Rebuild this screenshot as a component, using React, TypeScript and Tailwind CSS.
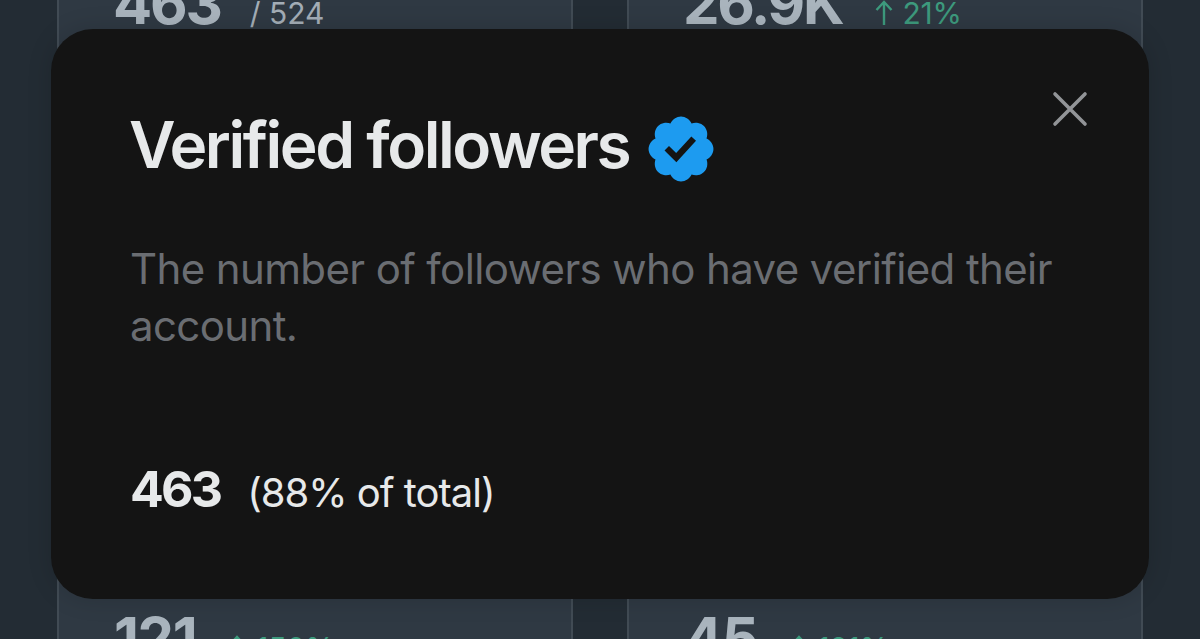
import React from 'react';

const VerifiedBadge: React.FC<{ className?: string }> = ({ className }) => (
  <svg viewBox="0 0 22 22" aria-label="Verified account" className={className} fill="#1d9bf0">
    <path d="M20.396 11c-.018-.646-.215-1.275-.57-1.816-.354-.54-.852-.972-1.438-1.246.223-.607.27-1.264.14-1.897-.131-.634-.437-1.218-.882-1.687-.47-.445-1.053-.75-1.687-.882-.633-.13-1.29-.083-1.897.14-.273-.587-.704-1.086-1.245-1.44S11.647 1.62 11 1.604c-.646.017-1.273.213-1.813.568s-.969.854-1.24 1.44c-.608-.223-1.267-.272-1.902-.14-.635.13-1.22.436-1.69.882-.445.47-.749 1.055-.878 1.688-.13.633-.08 1.29.144 1.896-.587.274-1.087.705-1.443 1.245-.356.54-.555 1.17-.574 1.817.02.647.218 1.276.574 1.817.356.54.856.972 1.443 1.245-.224.606-.274 1.263-.144 1.896.13.634.433 1.218.877 1.688.47.443 1.054.747 1.687.878.633.132 1.29.084 1.897-.136.274.586.705 1.084 1.246 1.439.54.354 1.17.551 1.816.569.647-.016 1.276-.213 1.817-.567s.972-.854 1.245-1.44c.604.239 1.266.296 1.903.164.636-.132 1.22-.447 1.68-.907.46-.46.776-1.044.908-1.681s.075-1.299-.165-1.903c.586-.274 1.084-.705 1.439-1.246.354-.54.551-1.17.569-1.816zM9.662 14.85l-3.429-3.428 1.293-1.302 2.072 2.072 4.4-4.794 1.347 1.246z" />
  </svg>
);

const ArrowUp: React.FC<{ className?: string }> = ({ className }) => (
  <svg viewBox="0 0 18 26" className={className} fill="none" stroke="currentColor" strokeWidth="2.4">
    <path d="M9 25V2M1.5 10 9 2l7.5 8" />
  </svg>
);

interface Stat {
  value: string;
  total?: string;
  change?: string;
}

const topStats: Stat[] = [
  { value: '463', total: '/ 524' },
  { value: '26.9K', change: '21%' },
];

const bottomStats: Stat[] = [
  { value: '121', change: '150%' },
  { value: '45', change: '121%' },
];

const StatCard: React.FC<{ stat: Stat; className: string }> = ({ stat, className }) => (
  <div className={`flex items-baseline border-x-2 border-[#414b54] bg-[#2f3943] pr-14 leading-none ${className}`}>
    <span className="text-[58px] font-bold text-[#a9b4bd]">{stat.value}</span>
    {stat.total && <span className="ml-[29px] text-[30px] tracking-normal text-[#a3adb6]">{stat.total}</span>}
    {stat.change && (
      <span className="ml-8 flex items-baseline gap-2.5 text-[30px] tracking-[-0.2px] text-[#3d9a7d]">
        <ArrowUp className="h-[26px] w-[18px] translate-y-[2px]" />
        {stat.change}
      </span>
    )}
  </div>
);

export default function App() {
  return (
    <div className="relative h-[639px] w-[1200px] overflow-hidden bg-[#232c34] font-['Inter',sans-serif]">
      {/* Overview cards */}
      <div className="flex h-full flex-col justify-between px-[57px]">
        <div className="grid h-[300px] grid-cols-2 gap-[54px]">
          {topStats.map((stat) => (
            <StatCard key={stat.value} stat={stat} className="-mt-[26px] pl-[54px] tracking-[-2.2px]" />
          ))}
        </div>
        <div className="grid h-[300px] grid-cols-2 gap-[54px]">
          {bottomStats.map((stat) => (
            <StatCard key={stat.value} stat={stat} className="pt-[270px] pl-[55px] tracking-[-1.4px]" />
          ))}
        </div>
      </div>

      {/* Dialog */}
      <div
        role="dialog"
        className="absolute top-[29px] left-[51px] flex h-[570px] w-[1098px] flex-col rounded-[42px] bg-[#141414] px-20 shadow-[0_0_24px_rgba(0,0,0,0.15)]"
      >
        <button aria-label="Close" className="absolute top-[62px] right-[61px] text-[#929497]">
          <svg viewBox="0 0 36 36" className="size-9" fill="none" stroke="currentColor" strokeWidth="3.6" strokeLinecap="round">
            <path d="M3 3 33 33M33 3 3 33" />
          </svg>
        </button>
        <div className="-ml-0.5 flex items-center pt-[78px]">
          <h2 className="text-[64px] leading-[76px] font-[560] tracking-[-2.45px] whitespace-nowrap text-[#e7e9ea]">
            Verified followers
          </h2>
          <VerifiedBadge className="mt-1 -mb-1 ml-[14px] size-[76px]" />
        </div>
        <p className="mt-[57px] -ml-px text-[42px] leading-[57px] tracking-[-0.62px] whitespace-nowrap text-[#6a6d72]">
          The number of followers who have verified their
          <br />
          account.
        </p>
        <div className="mt-[105px] -ml-px flex items-baseline leading-[60px] text-[#e7e9ea]">
          <span className="text-[50px] font-bold tracking-[-2.8px]">463</span>
          <span className="ml-[27px] text-[40px] tracking-[-1px]">(88% of total)</span>
        </div>
      </div>
    </div>
  );
}
